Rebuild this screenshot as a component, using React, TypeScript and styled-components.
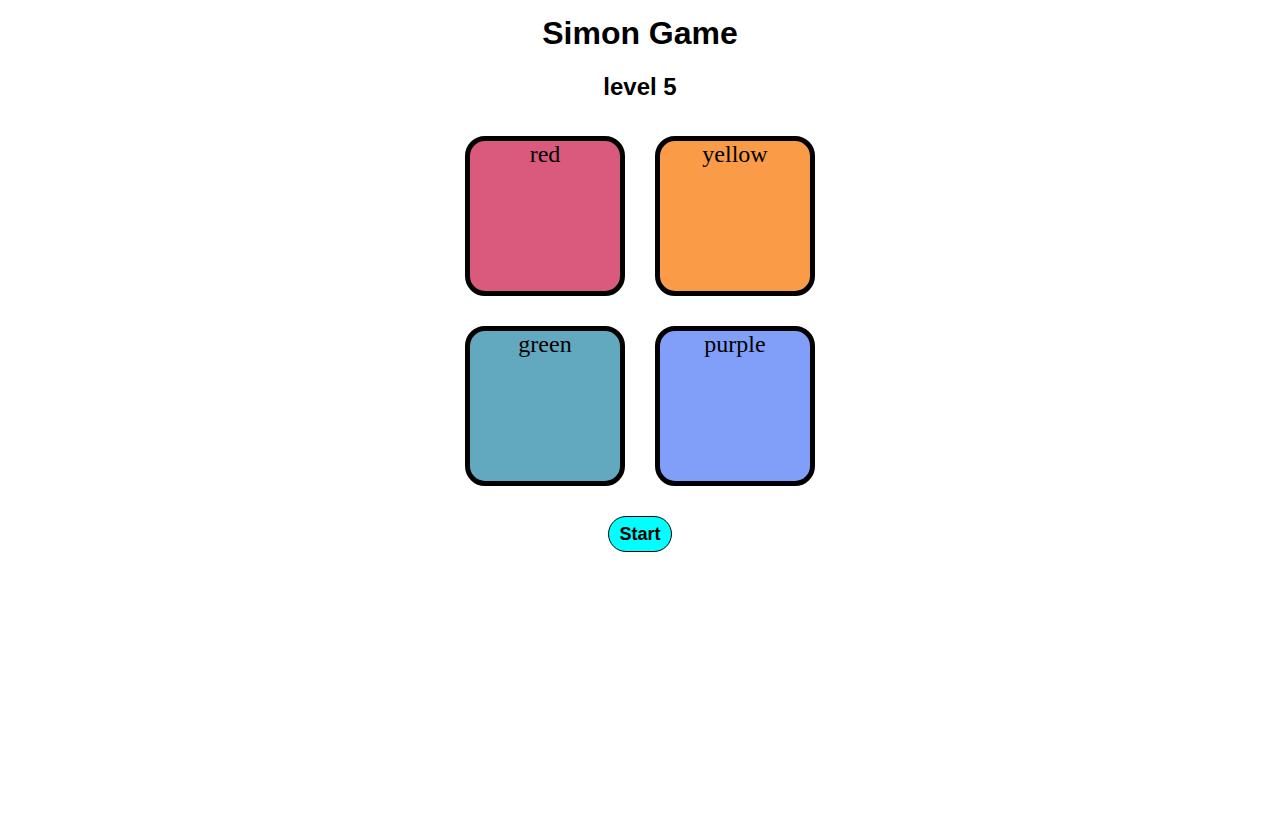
import React from "react";
import styled, { createGlobalStyle } from "styled-components";

const GlobalStyle = createGlobalStyle`
  html, body {
    margin: 0;
    padding: 0;
    background: #ffffff;
  }

  body {
    font-family: "Liberation Serif", "Times New Roman", serif;
    color: #000;
  }
`;

const Page = styled.div`
  display: flex;
  flex-direction: column;
  align-items: center;
  padding-top: 15px;
`;

const Title = styled.h1`
  font-family: "Liberation Sans", Arial, sans-serif;
  font-size: 32px;
  font-weight: bold;
  margin: 0 0 21px;
`;

const Level = styled.h2`
  font-family: "Liberation Sans", Arial, sans-serif;
  font-size: 24px;
  font-weight: bold;
  margin: 0 0 35px;
`;

const Board = styled.div`
  display: grid;
  grid-template-columns: repeat(2, 160px);
  grid-auto-rows: 160px;
  gap: 30px;
  margin-bottom: 30px;
`;

const Pad = styled.div<{ $color: string }>`
  box-sizing: border-box;
  border: 5px solid #000;
  border-radius: 20px;
  background: ${(p) => p.$color};
  font-size: 24px;
  text-align: center;
  cursor: pointer;
`;

const StartButton = styled.button`
  box-sizing: border-box;
  width: 64px;
  height: 36px;
  padding: 0;
  border: 1px solid #000;
  border-radius: 18px;
  background: #00ffff;
  font-family: "Liberation Sans", Arial, sans-serif;
  font-size: 18px;
  font-weight: bold;
  color: #000;
  cursor: pointer;
`;

const pads = [
  { name: "red", color: "#da5a7e" },
  { name: "yellow", color: "#f99b47" },
  { name: "green", color: "#62a9c0" },
  { name: "purple", color: "#819ff8" },
];

const App = () => {
  return (
    <>
      <GlobalStyle />
      <Page>
        <Title>Simon Game</Title>
        <Level>level 5</Level>
        <Board>
          {pads.map((pad) => (
            <Pad key={pad.name} $color={pad.color}>
              {pad.name}
            </Pad>
          ))}
        </Board>
        <StartButton>Start</StartButton>
      </Page>
    </>
  );
};

export default App;
